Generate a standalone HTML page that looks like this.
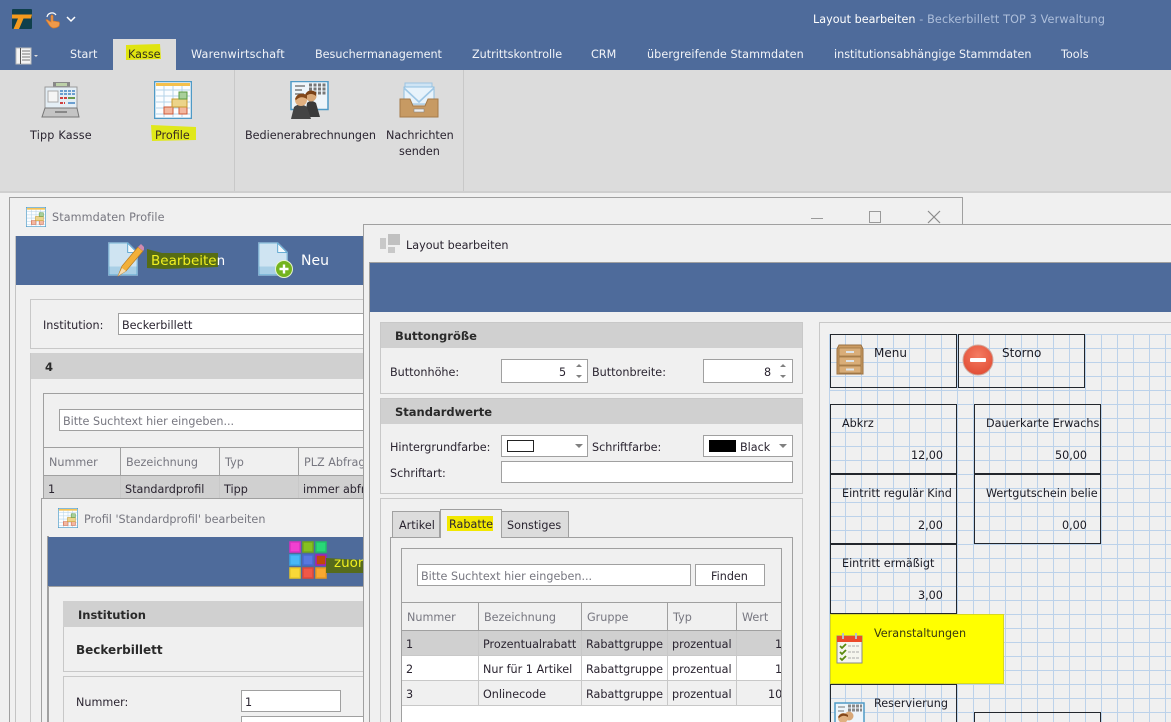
<!DOCTYPE html>
<html><head><meta charset="utf-8"><style>
html,body{margin:0;padding:0;width:1171px;height:722px;overflow:hidden;background:#f0f0f0}
body{position:relative;font-family:"DejaVu Sans","Liberation Sans",sans-serif;font-size:11.2px;color:#2a2430}
div,span.t,svg{position:absolute}
.t{position:absolute;white-space:nowrap;line-height:14px;margin-top:1px}
.big{margin-top:0}
.b{box-sizing:border-box;border:1px solid #c8c8c8}
.i{box-sizing:border-box;border:1px solid #a0a0a0;background:#fff}
.blue{background:#4e6b9b}
.h{background:#d0d0d0}
.hd{font-weight:bold;color:#2a2a2a;font-size:11.5px;margin-top:0}
.w{color:#fff}
.g{color:#777780}
.tab{color:#f2f4f8;font-size:11.2px}
.v{width:1px;background:#a0a0a0}
.l{height:1px;background:#a0a0a0}
.btn{box-sizing:border-box;border:1px solid #22262c;overflow:hidden}
.c{overflow:hidden}
</style></head><body>
<svg width="0" height="0" style="position:absolute"><defs>
<symbol id="cal" viewBox="0 0 38 38">
<rect x="0.5" y="0.5" width="37" height="37" fill="#fbfdff" stroke="#4f9ac6" stroke-width="1.6"/>
<rect x="2" y="2" width="34" height="3" fill="#f5c04c"/>
<path d="M2 9H36M2 15H36M2 21H36M2 27H36M2 33H36M10 5V36M19 5V36M28 5V36" stroke="#b5d3e8" stroke-width="1" fill="none"/>
<rect x="10" y="26" width="9" height="7" fill="#f3b8a0" stroke="#cc5a3a"/>
<rect x="25" y="26" width="8" height="7" fill="#f3b8a0" stroke="#cc5a3a"/>
<rect x="18" y="18" width="15" height="8" fill="#ecd48a" stroke="#c89a30"/>
<rect x="25" y="11" width="8" height="7" fill="#a8cf9a" stroke="#5a9a40"/>
</symbol>
<symbol id="doc" viewBox="0 0 32 36">
<path d="M1 1H21L31 11V35H1Z" fill="#cfe4f2" stroke="#fff" stroke-width="1.5"/>
<path d="M1 26H31V35H1Z" fill="#a9cfe6"/>
<path d="M21 1V11H31Z" fill="#f4fafd" stroke="#5ba5cf" stroke-width="1"/>
<path d="M1 1H21L31 11V35H1Z" fill="none" stroke="#5ba5cf" stroke-width="1"/>
</symbol>
<radialGradient id="red" cx="50%" cy="35%" r="70%"><stop offset="0" stop-color="#f47c62"/><stop offset="1" stop-color="#e04a32"/></radialGradient>
</defs></svg>

<!-- top -->
<div class="blue" style="left:0;top:0;width:1171px;height:70px"></div>
<svg style="left:12px;top:9px" width="20" height="20" viewBox="0 0 20 20"><rect width="20" height="20" rx="1" fill="#0f3f4c"/><path d="M0 5.5H20L19 9.500H11.500L7 20H1.500L6 9.500H0Z" fill="#f39a1e"/></svg>
<svg style="left:44px;top:9px" width="18" height="20" viewBox="0 0 18 20"><path d="M3 8A5 5 0 0 1 12 6" fill="none" stroke="#fff" stroke-width="1.2"/><path d="M7 7Q8 5 9 7V12L15 13Q16 14 15 17Q13 19 9 19Q6 18 4 14L2 11Q3 10 5 12L7 13Z" fill="#f09a4a" stroke="#d87a28" stroke-width=".7"/></svg>
<svg style="left:66px;top:15px" width="10" height="8" viewBox="0 0 10 8"><path d="M1 2L5 6L9 2" fill="none" stroke="#fff" stroke-width="1.5"/></svg>
<span class="t" style="left:813px;top:12px;color:#fff">Layout bearbeiten<span style="color:#aebfdb;letter-spacing:.15px"> - Beckerbillett TOP 3 Verwaltung</span></span>
<svg style="left:15px;top:47px" width="24" height="18" viewBox="0 0 24 18"><rect x="1" y="1" width="15" height="16" fill="#f4f4f4" stroke="#bbb"/><rect x="5" y="1" width="1" height="16" fill="#555"/><path d="M7 4H15M7 7H15M7 10H15M7 13H15" stroke="#777"/><path d="M19 8H23L21 10Z" fill="#ddd"/></svg>
<div style="left:113px;top:39px;width:63px;height:31px;background:#dcdcdc"></div>
<svg style="left:124px;top:43px" width="38" height="18"><path d="M2 2L36 1L37 16L2 17Z" fill="#e0e410"/></svg>
<span class="t tab" style="left:70px;top:47px">Start</span>
<span class="t" style="left:128px;top:47px;color:#33301c">Kasse</span>
<span class="t tab" style="left:191px;top:47px;letter-spacing:.2px">Warenwirtschaft</span>
<span class="t tab" style="left:315px;top:47px">Besuchermanagement</span>
<span class="t tab" style="left:472px;top:47px">Zutrittskontrolle</span>
<span class="t tab" style="left:591px;top:47px">CRM</span>
<span class="t tab" style="left:647px;top:47px;letter-spacing:.08px">übergreifende Stammdaten</span>
<span class="t tab" style="left:834px;top:47px">institutionsabhängige Stammdaten</span>
<span class="t tab" style="left:1061px;top:47px">Tools</span>

<!-- ribbon -->
<div style="left:0;top:70px;width:1171px;height:121px;background:#dcdcdc"></div>
<div style="left:234px;top:70px;width:1px;height:121px;background:#c8c8c8"></div>
<div style="left:463px;top:70px;width:1px;height:121px;background:#c8c8c8"></div>
<div style="left:0;top:191px;width:1171px;height:2px;background:#cfcfcf"></div>
<svg style="left:41px;top:80px" width="40" height="40" viewBox="0 0 40 40">
<rect x="12" y="2" width="17" height="6" fill="#888"/><rect x="15" y="3" width="11" height="3" fill="#bcd0a8"/>
<rect x="4" y="7" width="32" height="21" fill="#e4eef5" stroke="#9a9a9a"/>
<rect x="7" y="11" width="10" height="11" fill="#f5f5f5" stroke="#aaa"/>
<path d="M19 11H34M19 14H34" stroke="#6b9fd0" stroke-width="2" stroke-dasharray="3 1"/><path d="M19 18H26M19 23H24" stroke="#d04040" stroke-width="2" stroke-dasharray="3 1"/><path d="M27 18H34" stroke="#6a9a50" stroke-width="2"/><path d="M27 23H34" stroke="#6b9fd0" stroke-width="2"/>
<path d="M4 28H36L38 37H1Z" fill="#c4c4c4" stroke="#777"/><rect x="14" y="31" width="12" height="2" fill="#888"/></svg>
<span class="t" style="left:30px;top:128px;color:#2a2430;letter-spacing:.2px">Tipp Kasse</span>
<svg style="left:154px;top:81px" width="38" height="38"><use href="#cal"/></svg>
<svg style="left:149px;top:124px" width="48" height="18"><path d="M2 1L47 3V16L3 17Z" fill="#e0e81a"/></svg>
<span class="t" style="left:155px;top:128px;color:#3a2a20">Profile</span>
<svg style="left:290px;top:81px" width="40" height="38" viewBox="0 0 40 38">
<rect x="1" y="0.5" width="37" height="28" fill="#eef5fa" stroke="#4f9ac6" stroke-width="1.5"/>
<path d="M5 5H15M5 9H12M5 13H14" stroke="#666" stroke-width="1.3"/><path d="M19 4H36M19 8H36M19 12H36" stroke="#777" stroke-width="3" stroke-dasharray="3 1.5"/>
<path d="M15 36L17 22Q21 18 26 22L30 36Z" fill="#3a3a3a"/><circle cx="21" cy="15" r="5.5" fill="#d8a878"/><path d="M15 14Q18 7 26 11L26 15Q21 11 16 15Z" fill="#7a4218"/>
<path d="M1 38L4 26Q10 21 17 26L21 38Z" fill="#444"/><circle cx="11" cy="19" r="6" fill="#e0b080"/><path d="M5 18Q8 10 17 14L17 18Q11 14 6 19Z" fill="#84481a"/></svg>
<span class="t" style="left:245px;top:128px;color:#2a2430">Bedienerabrechnungen</span>
<svg style="left:399px;top:82px" width="40" height="38" viewBox="0 0 40 38">
<rect x="6" y="1" width="27" height="20" fill="#cfe4f4" stroke="#9cc4e2"/><path d="M5 5H35V22H5Z" fill="#e8f3fb" stroke="#8fbfe0"/><path d="M5 6L20 20L35 6" fill="none" stroke="#9fc8e6" stroke-width="1.6"/>
<path d="M1 17H11L14 24H26L29 17H39V35H1Z" fill="#c79a63" stroke="#a57a48"/><rect x="15" y="27" width="10" height="3" fill="#eee" stroke="#888" stroke-width=".6"/></svg>
<span class="t" style="left:386px;top:128px;color:#2a2430">Nachrichten</span>
<span class="t" style="left:399px;top:144px;color:#2a2430">senden</span>

<!-- Window 1 -->
<div style="left:9px;top:197px;width:954px;height:1px;background:#a0a0a0"></div>
<div class="v" style="left:9px;top:197px;height:525px"></div>
<div class="v" style="left:962px;top:197px;height:27px"></div>
<svg style="left:26px;top:207px" width="20" height="20"><use href="#cal"/></svg>
<span class="t g" style="left:52px;top:210px;letter-spacing:.1px">Stammdaten Profile</span>
<div class="v" style="left:15px;top:236px;height:486px;background:#c4c4c4"></div>
<div class="blue" style="left:16px;top:236px;width:347px;height:49px"></div>
<svg style="left:108px;top:241px" width="36" height="38" viewBox="0 0 36 38"><use href="#doc" width="30" height="36" x="0" y="0"/><path d="M10 35L14 25L30 6L35 10L18 30Z" fill="#f2b03a" stroke="#b87a20" stroke-width=".7"/><path d="M30 6L33 3L37 7L35 10Z" fill="#d08ab0"/><path d="M10 35L14 27L18 30Z" fill="#f5dcb0"/></svg>
<svg style="left:146px;top:248px" width="75" height="22"><path d="M1 1L16 5L72 5V19L18 21L1 20Z" fill="#566c14"/></svg>
<span class="t big" style="left:151px;top:254px;font-size:13.5px;color:#f2f020">Bearbeite<span style="color:#fff">n</span></span>
<svg style="left:258px;top:241px" width="36" height="38" viewBox="0 0 36 38"><use href="#doc" width="30" height="36" x="0" y="0"/><circle cx="26" cy="28" r="8.5" fill="#74b41e" stroke="#e8f4d0" stroke-width="1"/><path d="M26 23.5V32.5M21.5 28H30.5" stroke="#fff" stroke-width="2.4"/></svg>
<span class="t w big" style="left:301px;top:254px;font-size:14px">Neu</span>
<div class="b" style="left:30px;top:299px;width:333px;height:50px;border-right:0"></div>
<span class="t" style="left:43px;top:318px">Institution:</span>
<div class="i" style="left:118px;top:313px;width:245px;height:22px;border-right:0"></div>
<span class="t" style="left:122px;top:318px">Beckerbillett</span>
<div class="h" style="left:31px;top:353px;width:332px;height:26px"></div>
<div style="left:30px;top:353px;width:1px;height:369px;background:#c8c8c8"></div>
<span class="t hd" style="left:45px;top:360px">4</span>
<div style="left:43px;top:393px;width:320px;height:1px;background:#a0a0a0"></div>
<div class="v" style="left:43px;top:393px;height:105px"></div>
<div class="i" style="left:59px;top:409px;width:304px;height:22px;border-right:0"></div>
<span class="t g" style="left:63px;top:414px">Bitte Suchtext hier eingeben...</span>
<div class="l" style="left:43px;top:447px;width:320px"></div>
<div class="l" style="left:43px;top:475px;width:320px"></div>
<div class="v" style="left:120px;top:447px;height:51px"></div>
<div class="v" style="left:219px;top:447px;height:51px"></div>
<div class="v" style="left:298px;top:447px;height:51px"></div>
<span class="t g" style="left:49px;top:455px">Nummer</span>
<span class="t g" style="left:126px;top:455px">Bezeichnung</span>
<span class="t g" style="left:225px;top:455px">Typ</span>
<div class="c" style="left:304px;top:455px;width:59px;height:16px"><span class="t g" style="left:0;top:0">PLZ Abfrage</span></div>
<div class="h" style="left:44px;top:476px;width:319px;height:22px"></div>
<div class="v" style="left:120px;top:476px;height:22px;background:#c8c8c8"></div>
<div class="v" style="left:219px;top:476px;height:22px;background:#c8c8c8"></div>
<div class="v" style="left:298px;top:476px;height:22px;background:#c8c8c8"></div>
<span class="t" style="left:48px;top:482px">1</span>
<span class="t" style="left:125px;top:482px">Standardprofil</span>
<span class="t" style="left:224px;top:482px">Tipp</span>
<div class="c" style="left:303px;top:482px;width:60px;height:16px"><span class="t" style="left:0;top:0">immer abfragen</span></div>

<!-- Window 3 -->
<div style="left:41px;top:498px;width:322px;height:224px;background:#f0f0f0"></div>
<div style="left:41px;top:498px;width:322px;height:1px;background:#a0a0a0"></div>
<div class="v" style="left:41px;top:498px;height:224px"></div>
<svg style="left:58px;top:508px" width="20" height="20"><use href="#cal"/></svg>
<span class="t g" style="left:84px;top:512px">Profil 'Standardprofil' bearbeiten</span>
<div style="left:47px;top:536px;width:2px;height:186px;background:#a0a0a0"></div>
<div class="blue" style="left:48px;top:537px;width:315px;height:49px"></div>
<div style="left:49px;top:586px;width:314px;height:1px;background:#a0a0a0"></div>
<svg style="left:289px;top:541px" width="39" height="39" viewBox="0 0 39 39">
<g stroke-width="1.5"><rect x="1" y="1" width="10" height="10" fill="#f040d0" stroke="#d830c0"/><rect x="14" y="1" width="10" height="10" fill="#86c020" stroke="#72a818"/><rect x="27" y="1" width="10" height="10" fill="#28d878" stroke="#20c068"/>
<rect x="1" y="14" width="10" height="10" fill="#48b8f8" stroke="#38a8e8"/><rect x="14" y="14" width="10" height="10" fill="#5878e0" stroke="#4868d0"/><rect x="27" y="14" width="10" height="10" fill="#c04808" stroke="#a020c0"/>
<rect x="1" y="27" width="10" height="10" fill="#f8d838" stroke="#e8c828"/><rect x="14" y="27" width="10" height="10" fill="#f05848" stroke="#e04838"/><rect x="27" y="27" width="10" height="10" fill="#f8a830" stroke="#e89820"/></g></svg>
<svg style="left:326px;top:557px" width="37" height="18"><path d="M0 1L37 3V16L0 16Z" fill="#566c14" opacity=".95"/></svg>
<div class="c" style="left:334px;top:555px;width:29px;height:18px"><span class="t big" style="left:0;top:1px;font-size:13.5px;color:#f2f020">zuordnen</span></div>
<div class="h" style="left:63px;top:601px;width:300px;height:26px"></div>
<span class="t hd" style="left:78px;top:608px">Institution</span>
<div class="b" style="left:63px;top:627px;width:300px;height:45px;border-top:0;border-right:0"></div>
<span class="t hd" style="left:76px;top:643px;font-size:12px">Beckerbillett</span>
<div class="b" style="left:63px;top:676px;width:300px;height:46px;border-bottom:0;border-right:0"></div>
<span class="t" style="left:76px;top:695px">Nummer:</span>
<div class="i" style="left:241px;top:690px;width:100px;height:22px"></div>
<span class="t" style="left:245px;top:695px">1</span>
<div class="i" style="left:241px;top:716px;width:122px;height:22px;border-right:0"></div>

<!-- Window 2 -->
<div style="left:363px;top:224px;width:808px;height:498px;background:#f0f0f0"></div>
<div class="l" style="left:363px;top:224px;width:808px"></div>
<div class="v" style="left:363px;top:224px;height:498px"></div>
<svg style="left:380px;top:234px" width="21" height="20"><rect x="8" y="0" width="12" height="11" fill="#c0c0c0"/><rect x="0" y="4" width="6" height="11" fill="#c8c8c8"/><rect x="8" y="13" width="7" height="6" fill="#c8c8c8"/></svg>
<span class="t" style="left:406px;top:238px">Layout bearbeiten</span>
<div class="l" style="left:369px;top:262px;width:802px"></div>
<div class="v" style="left:369px;top:262px;height:460px"></div>
<div class="blue" style="left:370px;top:263px;width:801px;height:49px"></div>
<!-- controls over window 1 -->
<div style="left:811px;top:218px;width:12px;height:1px;background:#9a9a9a"></div>
<div class="b" style="left:869px;top:211px;width:12px;height:12px;border-color:#9a9a9a"></div>
<svg style="left:927px;top:210px" width="14" height="14"><path d="M1 1L13 13M13 1L1 13" stroke="#8a8a8a" stroke-width="1.2"/></svg>

<!-- Buttongroesse -->
<div class="b" style="left:380px;top:322px;width:423px;height:72px"></div>
<div class="h" style="left:381px;top:323px;width:421px;height:25px"></div>
<span class="t hd" style="left:395px;top:329px">Buttongröße</span>
<span class="t" style="left:390px;top:365px">Buttonhöhe:</span>
<div class="i" style="left:501px;top:359px;width:87px;height:24px"></div>
<span class="t" style="left:559px;top:365px">5</span>
<svg style="left:574px;top:362px" width="10" height="18"><path d="M2 5L5 2L8 5ZM2 13L8 13L5 16Z" fill="#808080"/></svg>
<span class="t" style="left:592px;top:365px">Buttonbreite:</span>
<div class="i" style="left:703px;top:359px;width:90px;height:24px"></div>
<span class="t" style="left:764px;top:365px">8</span>
<svg style="left:778px;top:362px" width="10" height="18"><path d="M2 5L5 2L8 5ZM2 13L8 13L5 16Z" fill="#808080"/></svg>

<!-- Standardwerte -->
<div class="b" style="left:380px;top:398px;width:423px;height:96px"></div>
<div class="h" style="left:381px;top:399px;width:421px;height:25px"></div>
<span class="t hd" style="left:395px;top:405px">Standardwerte</span>
<span class="t" style="left:390px;top:440px">Hintergrundfarbe:</span>
<div class="i" style="left:501px;top:435px;width:87px;height:22px"></div>
<div style="left:507px;top:440px;width:25px;height:10px;border:1px solid #222;background:#fff"></div>
<svg style="left:574px;top:443px" width="10" height="6"><path d="M1 1H9L5 5Z" fill="#808080"/></svg>
<span class="t" style="left:592px;top:440px">Schriftfarbe:</span>
<div class="i" style="left:703px;top:435px;width:90px;height:22px"></div>
<div style="left:709px;top:440px;width:27px;height:12px;background:#000"></div>
<span class="t" style="left:740px;top:440px">Black</span>
<svg style="left:778px;top:443px" width="10" height="6"><path d="M1 1H9L5 5Z" fill="#808080"/></svg>
<span class="t" style="left:390px;top:466px">Schriftart:</span>
<div class="i" style="left:501px;top:461px;width:292px;height:22px"></div>

<!-- Tabs box -->
<div class="b" style="left:380px;top:498px;width:423px;height:224px;border-bottom:0"></div>
<div style="left:390px;top:537px;width:403px;height:185px;box-sizing:border-box;border:1px solid #a0a0a0;border-bottom:0"></div>
<div style="left:392px;top:511px;width:48px;height:26px;box-sizing:border-box;border:1px solid #a0a0a0;border-bottom:0;background:#dcdcdc"></div>
<div style="left:501px;top:511px;width:68px;height:26px;box-sizing:border-box;border:1px solid #a0a0a0;border-bottom:0;background:#dcdcdc"></div>
<div style="left:440px;top:509px;width:62px;height:29px;box-sizing:border-box;border:1px solid #a0a0a0;border-bottom:0;background:#f0f0f0"></div>
<div style="left:447px;top:516px;width:46px;height:15px;background:#f2e800"></div>
<span class="t" style="left:399px;top:518px">Artikel</span>
<span class="t" style="left:449px;top:517px">Rabatte</span>
<span class="t" style="left:507px;top:518px">Sonstiges</span>

<div style="left:401px;top:548px;width:381px;height:174px;box-sizing:border-box;border:1px solid #a0a0a0;border-bottom:0;overflow:hidden"></div>
<div class="i" style="left:417px;top:564px;width:274px;height:22px"></div>
<span class="t g" style="left:421px;top:569px">Bitte Suchtext hier eingeben...</span>
<div class="i" style="left:695px;top:564px;width:70px;height:22px"></div>
<span class="t" style="left:711px;top:569px">Finden</span>
<div class="l" style="left:401px;top:602px;width:381px"></div>
<div class="l" style="left:401px;top:630px;width:381px"></div>
<div style="left:402px;top:631px;width:379px;height:24px;background:#d0d0d0"></div>
<div style="left:402px;top:656px;width:379px;height:24px;background:#fff"></div>
<div style="left:402px;top:681px;width:379px;height:24px;background:#f0f0f0"></div>
<div style="left:402px;top:706px;width:379px;height:16px;background:#fff"></div>
<div style="left:402px;top:655px;width:379px;height:1px;background:#c8c8c8"></div>
<div style="left:402px;top:680px;width:379px;height:1px;background:#c8c8c8"></div>
<div style="left:402px;top:705px;width:379px;height:1px;background:#c8c8c8"></div>
<div class="v" style="left:478px;top:602px;height:28px"></div>
<div class="v" style="left:581px;top:602px;height:28px"></div>
<div class="v" style="left:667px;top:602px;height:28px"></div>
<div class="v" style="left:736px;top:602px;height:28px"></div>
<div class="v" style="left:478px;top:631px;height:75px;background:#c8c8c8"></div>
<div class="v" style="left:581px;top:631px;height:75px;background:#c8c8c8"></div>
<div class="v" style="left:667px;top:631px;height:75px;background:#c8c8c8"></div>
<div class="v" style="left:736px;top:631px;height:75px;background:#c8c8c8"></div>
<div class="v" style="left:781px;top:602px;height:120px"></div>
<span class="t g" style="left:407px;top:610px">Nummer</span>
<span class="t g" style="left:484px;top:610px">Bezeichnung</span>
<span class="t g" style="left:587px;top:610px">Gruppe</span>
<span class="t g" style="left:673px;top:610px">Typ</span>
<span class="t g" style="left:742px;top:610px">Wert</span>
<span class="t" style="left:406px;top:637px">1</span><span class="t" style="left:483px;top:637px">Prozentualrabatt</span><span class="t" style="left:586px;top:637px">Rabattgruppe</span><span class="t" style="left:672px;top:637px">prozentual</span>
<span class="t" style="left:406px;top:662px">2</span><span class="t" style="left:483px;top:662px">Nur für 1 Artikel</span><span class="t" style="left:586px;top:662px">Rabattgruppe</span><span class="t" style="left:672px;top:662px">prozentual</span>
<span class="t" style="left:406px;top:687px">3</span><span class="t" style="left:483px;top:687px">Onlinecode</span><span class="t" style="left:586px;top:687px">Rabattgruppe</span><span class="t" style="left:672px;top:687px">prozentual</span>
<div class="c" style="left:737px;top:637px;width:44px;height:16px"><span class="t" style="left:38px;top:0">1,00</span></div>
<div class="c" style="left:737px;top:662px;width:44px;height:16px"><span class="t" style="left:38px;top:0">1,00</span></div>
<div class="c" style="left:737px;top:687px;width:44px;height:16px"><span class="t" style="left:31px;top:0">10,00</span></div>

<!-- Right panel -->
<div style="left:819px;top:322px;width:352px;height:1px;background:#c8c8c8"></div>
<div style="left:819px;top:322px;width:1px;height:400px;background:#c8c8c8"></div>
<div style="left:829px;top:334px;width:342px;height:388px;background-color:#f0f0f0;background-image:linear-gradient(to right,#bcd2ea 1px,transparent 1px),linear-gradient(to bottom,#bcd2ea 1px,transparent 1px);background-size:16px 14px;background-position:0 0"></div>

<div class="btn" style="left:830px;top:334px;width:127px;height:54px"></div>
<svg style="left:836px;top:344px" width="28" height="32" viewBox="0 0 28 32"><path d="M3 1H25L27 5V30H1V5Z" fill="#cb9b62" stroke="#9a6f3f"/><rect x="3" y="4" width="22" height="8" fill="#d9ad78" stroke="#96703f" stroke-width=".7"/><rect x="3" y="13" width="22" height="8" fill="#d9ad78" stroke="#96703f" stroke-width=".7"/><rect x="3" y="22" width="22" height="7" fill="#d9ad78" stroke="#96703f" stroke-width=".7"/><path d="M10 8H18M10 17H18M10 25.500H18" stroke="#dde4ea" stroke-width="2"/></svg>
<span class="t big" style="left:874px;top:346px;color:#1a1a24;font-size:12px">Menu</span>
<div class="btn" style="left:958px;top:334px;width:127px;height:54px"></div>
<svg style="left:962px;top:344px" width="32" height="32" viewBox="0 0 32 32"><circle cx="16" cy="16" r="15" fill="url(#red)" stroke="#d0a89c" stroke-width="1"/><rect x="8" y="14" width="16" height="4" rx="1" fill="#fff"/></svg>
<span class="t big" style="left:1002px;top:346px;color:#1a1a24;font-size:12px">Storno</span>

<div class="btn" style="left:830px;top:404px;width:127px;height:70px"></div>
<span class="t" style="left:842px;top:416px;color:#1a1a24">Abkrz</span>
<span class="t" style="left:911px;top:448px;color:#1a1a24">12,00</span>
<div class="btn" style="left:974px;top:404px;width:127px;height:70px"></div>
<div class="c" style="left:986px;top:416px;width:113px;height:16px"><span class="t" style="left:0;top:0;color:#1a1a24">Dauerkarte Erwachsene</span></div>
<span class="t" style="left:1055px;top:448px;color:#1a1a24">50,00</span>
<div class="btn" style="left:830px;top:474px;width:127px;height:70px"></div>
<div class="c" style="left:842px;top:486px;width:112px;height:16px"><span class="t" style="left:0;top:0;color:#1a1a24">Eintritt regulär Kind</span></div>
<span class="t" style="left:918px;top:518px;color:#1a1a24">2,00</span>
<div class="btn" style="left:974px;top:474px;width:127px;height:70px"></div>
<div class="c" style="left:986px;top:486px;width:112px;height:16px"><span class="t" style="left:0;top:0;color:#1a1a24">Wertgutschein beliebig</span></div>
<span class="t" style="left:1062px;top:518px;color:#1a1a24">0,00</span>
<div class="btn" style="left:830px;top:544px;width:127px;height:70px"></div>
<span class="t" style="left:842px;top:556px;color:#1a1a24">Eintritt ermäßigt</span>
<span class="t" style="left:918px;top:588px;color:#1a1a24">3,00</span>

<div style="left:830px;top:614px;width:174px;height:70px;box-sizing:border-box;background:#ffff00;border:1px solid #d8d820"></div>
<span class="t" style="left:874px;top:626px;color:#3a3a10">Veranstaltungen</span>
<svg style="left:836px;top:632px" width="28" height="32" viewBox="0 0 28 32"><rect x="1" y="4" width="25" height="27" fill="#f6f6ee" stroke="#8a8a8a"/><rect x="1" y="4" width="25" height="6" fill="#ec4a2a"/><rect x="6" y="1" width="2" height="6" fill="#b8c0c8"/><rect x="19" y="1" width="2" height="6" fill="#b8c0c8"/><path d="M4 14L6 16L10 12M4 20L6 22L10 18M4 26L6 28L10 24" stroke="#5a8a10" stroke-width="1.8" fill="none"/><path d="M12 14H24M12 20H24M12 26H24" stroke="#aaa" stroke-dasharray="3 1"/></svg>

<div class="btn" style="left:830px;top:684px;width:127px;height:50px"></div>
<span class="t" style="left:874px;top:696px;color:#1a1a24">Reservierung</span>
<svg style="left:834px;top:702px" width="32" height="20" viewBox="0 0 32 20"><rect x="1" y="1" width="29" height="22" fill="#eef5fa" stroke="#4f9ac6" stroke-width="1.5"/><path d="M4 5H11M4 9H10" stroke="#777"/><path d="M14 4H28M14 8H28" stroke="#888" stroke-width="3" stroke-dasharray="3 1"/><circle cx="15" cy="14" r="4.5" fill="#d8a878"/><circle cx="9" cy="16" r="5" fill="#e0b080"/><path d="M4 15Q8 9 14 13L14 15Q9 12 5 16Z" fill="#84481a"/></svg>
<div class="btn" style="left:974px;top:712px;width:127px;height:30px"></div>
</body></html>
